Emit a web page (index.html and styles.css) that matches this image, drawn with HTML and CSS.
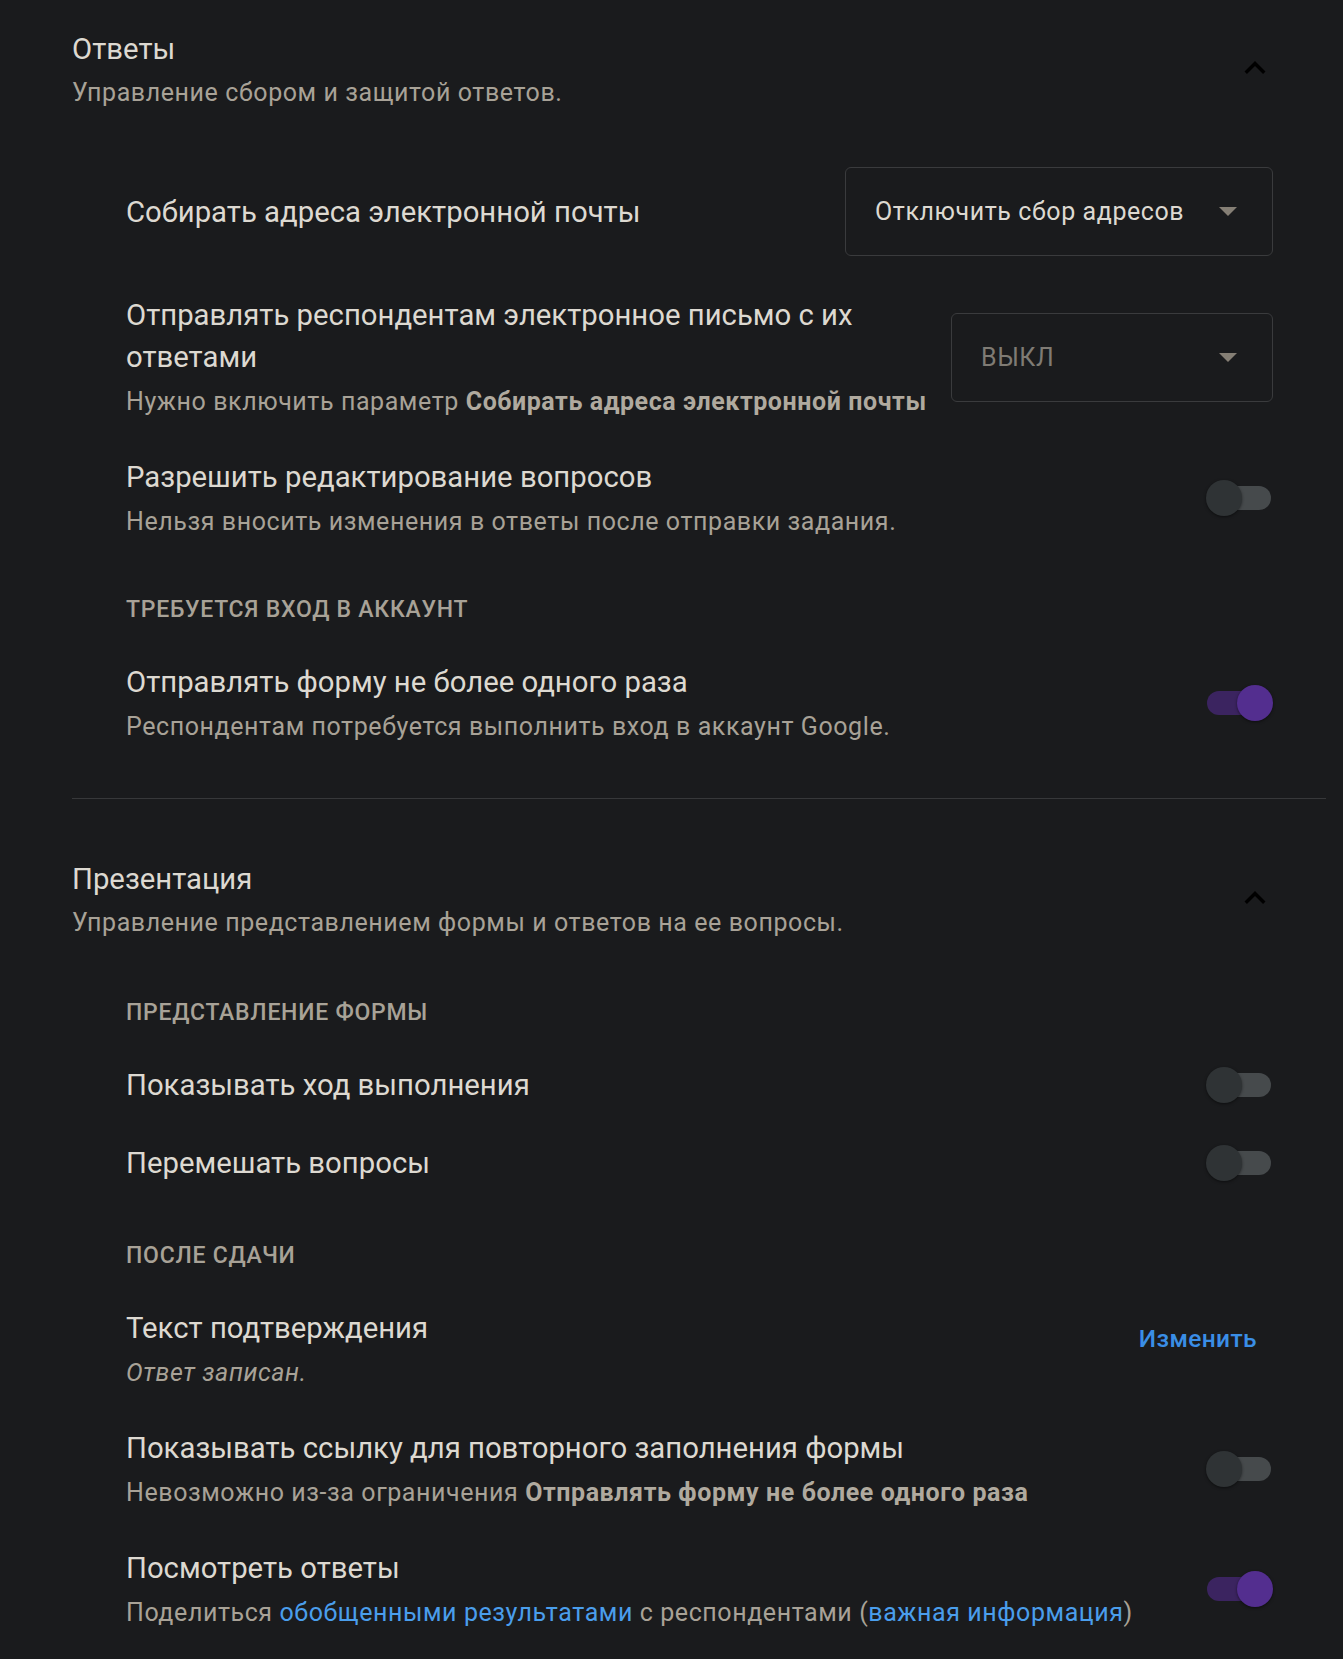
FILE: index.html
```html
<!DOCTYPE html>
<html lang="ru">
<head>
<meta charset="utf-8">
<title>Настройки</title>
<link rel="stylesheet" href="styles.css">
</head>
<body>
<div class="page">
  <section class="section">
    <header class="sec-head">
      <div class="sec-text">
        <h2 class="sec-title">Ответы</h2>
        <p class="sec-sub">Управление сбором и защитой ответов.</p>
      </div>
      <button class="chev" aria-label="Свернуть"><svg viewBox="0 0 24 24"><path d="M12 8l-6 6 1.41 1.41L12 10.83l4.59 4.58L18 14z"/></svg></button>
    </header>
    <div class="rows first">
      <div class="row row-select">
        <div class="row-text"><div class="label">Собирать адреса электронной почты</div></div>
        <div class="select wide"><span class="select-value">Отключить сбор адресов</span><span class="arrow"></span></div>
      </div>
      <div class="row">
        <div class="row-text">
          <div class="label">Отправлять респондентам электронное письмо с их ответами</div>
          <div class="sub">Нужно включить параметр <b>Собирать адреса электронной почты</b></div>
        </div>
        <div class="select narrow disabled"><span class="select-value">ВЫКЛ</span><span class="arrow"></span></div>
      </div>
      <div class="row">
        <div class="row-text">
          <div class="label">Разрешить редактирование вопросов</div>
          <div class="sub">Нельзя вносить изменения в ответы после отправки задания.</div>
        </div>
        <div class="switch"><span class="track"></span><span class="knob"></span></div>
      </div>
      <div class="caps">Требуется вход в аккаунт</div>
      <div class="row">
        <div class="row-text">
          <div class="label">Отправлять форму не более одного раза</div>
          <div class="sub">Респондентам потребуется выполнить вход в аккаунт Google.</div>
        </div>
        <div class="switch on"><span class="track"></span><span class="knob"></span></div>
      </div>
    </div>
  </section>
  <hr class="divider">
  <section class="section">
    <header class="sec-head">
      <div class="sec-text">
        <h2 class="sec-title">Презентация</h2>
        <p class="sec-sub">Управление представлением формы и ответов на ее вопросы.</p>
      </div>
      <button class="chev" aria-label="Свернуть"><svg viewBox="0 0 24 24"><path d="M12 8l-6 6 1.41 1.41L12 10.83l4.59 4.58L18 14z"/></svg></button>
    </header>
    <div class="rows">
      <div class="caps">Представление формы</div>
      <div class="row">
        <div class="row-text"><div class="label">Показывать ход выполнения</div></div>
        <div class="switch"><span class="track"></span><span class="knob"></span></div>
      </div>
      <div class="row">
        <div class="row-text"><div class="label">Перемешать вопросы</div></div>
        <div class="switch"><span class="track"></span><span class="knob"></span></div>
      </div>
      <div class="caps caps-wide">После сдачи</div>
      <div class="row">
        <div class="row-text">
          <div class="label">Текст подтверждения</div>
          <div class="sub italic">Ответ записан.</div>
        </div>
        <button class="text-btn">Изменить</button>
      </div>
      <div class="row">
        <div class="row-text">
          <div class="label">Показывать ссылку для повторного заполнения формы</div>
          <div class="sub">Невозможно из-за ограничения <b>Отправлять форму не более одного раза</b></div>
        </div>
        <div class="switch"><span class="track"></span><span class="knob"></span></div>
      </div>
      <div class="row">
        <div class="row-text">
          <div class="label">Посмотреть ответы</div>
          <div class="sub">Поделиться <a href="#" class="link">обобщенными результатами</a> с респондентами (<a href="#" class="link">важная информация</a>)</div>
        </div>
        <div class="switch on"><span class="track"></span><span class="knob"></span></div>
      </div>
    </div>
  </section>
</div>
</body>
</html>
```

FILE: styles.css
```css
html, body {
  margin: 0;
  background: #1a1b1d;
}
body {
  font-family: Roboto, "Noto Sans", Arial, sans-serif;
  color: #ddd9d1;
  min-height: 1659px;
}
.page {
  padding: 0 17px 40px 72px;
}
.sec-head {
  display: flex;
  align-items: center;
  justify-content: space-between;
  padding: 29px 50px 0 0;
}
.sec-title {
  margin: 0;
  font-size: 29.3px;
  line-height: 40px;
  font-weight: 400;
  color: #ddd9d1;
}
.sec-sub {
  margin: 6px 0 0;
  font-size: 25px;
  line-height: 36px;
  letter-spacing: 0.58px;
  color: #a8a297;
}
.chev {
  width: 42px;
  height: 42px;
  padding: 0;
  margin-bottom: 4px;
  border: 0;
  background: none;
  flex: none;
}
.chev svg {
  width: 42px;
  height: 42px;
  display: block;
  fill: #000;
}
.rows {
  padding: 0 53px 0 54px;
}
.rows.first {
  margin-top: 56px;
}
.row {
  display: flex;
  align-items: center;
  justify-content: space-between;
  gap: 24px;
}
.row + .row {
  margin-top: 36px;
}
.row-select + .row {
  margin-top: 38px;
}
.row-text {
  flex: 1;
  min-width: 0;
}
.label {
  font-size: 29.3px;
  line-height: 42px;
  color: #ddd9d1;
}
.sub {
  margin-top: 6px;
  font-size: 25px;
  line-height: 36px;
  letter-spacing: 0.58px;
  color: #a8a297;
}
.sub b {
  font-weight: 700;
  color: #b0aa9f;
}
.sub.italic {
  font-style: italic;
}
.link {
  color: #4a9eec;
  text-decoration: none;
}
.caps {
  margin-top: 52px;
  font-size: 23px;
  line-height: 36px;
  font-weight: 500;
  letter-spacing: 0.75px;
  text-transform: uppercase;
  color: #a8a297;
}
.caps.caps-wide {
  margin-top: 54px;
}
.rows > .caps:first-child {
  margin-top: 54px;
}
.caps + .row {
  margin-top: 33px;
}
.divider {
  margin: 53px 0 31px;
  border: 0;
  height: 1px;
  background: #37383a;
}
.select {
  flex: none;
  box-sizing: border-box;
  height: 89px;
  border: 1px solid #3a3b3d;
  border-radius: 6px;
  display: flex;
  align-items: center;
  justify-content: space-between;
  padding: 0 35px 0 29px;
  font-size: 25px;
  letter-spacing: 0.58px;
  color: #ddd9d1;
}
.select.wide {
  width: 428px;
}
.select.narrow {
  width: 322px;
}
.select.disabled .select-value {
  color: #7f7b74;
}
.arrow {
  width: 0;
  height: 0;
  border-left: 9px solid transparent;
  border-right: 9px solid transparent;
  border-top: 9px solid #857f75;
}
.switch {
  position: relative;
  flex: none;
  width: 67px;
  height: 36px;
}
.switch .track {
  position: absolute;
  left: 1px;
  top: 6px;
  width: 64px;
  height: 24px;
  border-radius: 12px;
  background: #464a4c;
}
.switch .knob {
  position: absolute;
  left: 0;
  top: 0;
  width: 36px;
  height: 36px;
  border-radius: 50%;
  background: #2f3335;
  box-shadow: 0 1px 3px rgba(0, 0, 0, 0.5);
}
.switch.on .track {
  background: #3b2460;
}
.switch.on .knob {
  left: 31px;
  background: #532e8f;
}
.text-btn {
  flex: none;
  padding: 0 16px;
  margin-bottom: 20px;
  border: 0;
  background: none;
  font-family: Roboto, "Noto Sans", Arial, sans-serif;
  font-size: 24.5px;
  font-weight: 500;
  letter-spacing: 0.4px;
  line-height: 42px;
  color: #3a8ee6;
}
```
